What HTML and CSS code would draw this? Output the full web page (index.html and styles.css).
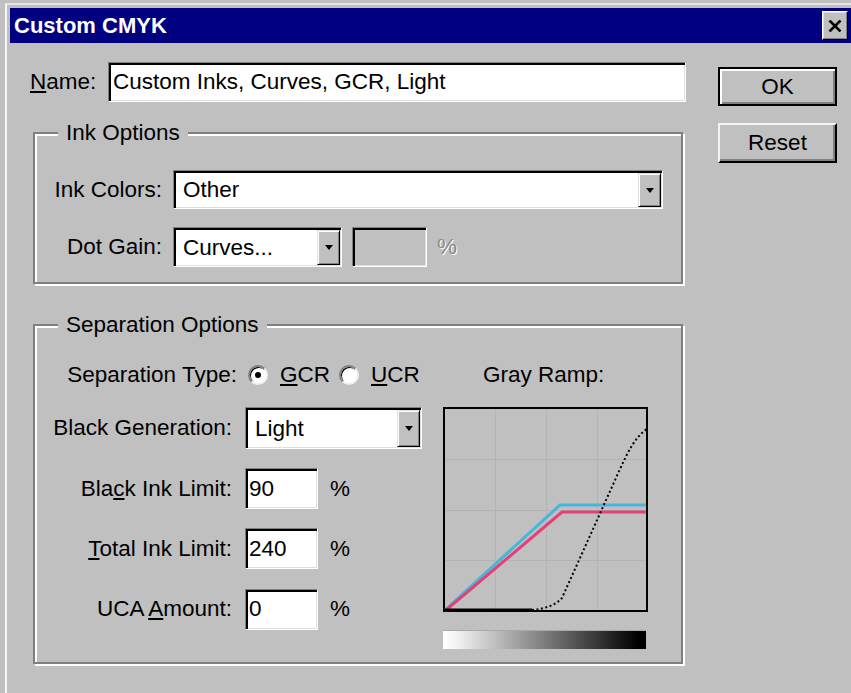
FILE: index.html
```html
<!DOCTYPE html>
<html lang="en">
<head>
<meta charset="utf-8">
<title>Custom CMYK</title>
<link rel="stylesheet" href="styles.css">
</head>
<body>
<div class="window">
  <div class="titlebar">
    <span class="title">Custom CMYK</span>
    <button class="close" aria-label="Close">
      <svg width="14" height="12" viewBox="0 0 14 12"><path d="M1.5 0.5 L12.5 11.5 M12.5 0.5 L1.5 11.5" stroke="#000" stroke-width="2.6" fill="none"/></svg>
    </button>
  </div>

  <div class="content">
    <div class="form">
      <div class="name-row">
        <span class="name-label"><u>N</u>ame:</span>
        <div class="field name-field">Custom Inks, Curves, GCR, Light</div>
      </div>

      <fieldset class="group ink">
        <legend>Ink Options</legend>
        <div class="ink-grid">
          <span class="lbl">Ink Colors:</span>
          <div class="combo wide"><span class="combo-text">Other</span><span class="drop"></span></div>
          <span class="lbl">Dot Gain:</span>
          <div class="dot-row">
            <div class="combo short"><span class="combo-text">Curves...</span><span class="drop"></span></div>
            <div class="field small disabled"></div>
            <span class="pct dim">%</span>
          </div>
        </div>
      </fieldset>

      <fieldset class="group sep">
        <legend>Separation Options</legend>
        <div class="sep-body">
          <div class="sep-grid">
            <span class="lbl lbl-type">Separation Type:</span>
            <div class="radios">
              <span class="radio on"><span class="dot"></span></span>
              <span class="radio-text first"><u>G</u>CR</span>
              <span class="radio"></span>
              <span class="radio-text"><u>U</u>CR</span>
            </div>

            <span class="lbl">Black Generation:</span>
            <div class="combo gen"><span class="combo-text">Light</span><span class="drop"></span></div>

            <span class="lbl">Bla<u>c</u>k Ink Limit:</span>
            <div class="num-row"><div class="field num">90</div><span class="pct">%</span></div>

            <span class="lbl"><u>T</u>otal Ink Limit:</span>
            <div class="num-row"><div class="field num">240</div><span class="pct">%</span></div>

            <span class="lbl">UCA <u>A</u>mount:</span>
            <div class="num-row"><div class="field num">0</div><span class="pct">%</span></div>
          </div>

          <div class="ramp">
            <span class="ramp-title">Gray Ramp:</span>
            <svg class="graph" width="205" height="205" viewBox="0 0 205 205">
              <rect x="1" y="1" width="203" height="203" fill="#c0c0c0" stroke="#000" stroke-width="2"/>
              <g stroke="#b3b3b3" stroke-width="1">
                <path d="M52.5 2 V203 M103.5 2 V203 M154.5 2 V203"/>
                <path d="M2 52.5 H203 M2 103.5 H203 M2 153.5 H203"/>
              </g>
              <polyline points="2,203 117,98 203,98" fill="none" stroke="#46b6da" stroke-width="3"/>
              <polyline points="2,204 119,105 203,105" fill="none" stroke="#e63f78" stroke-width="3"/>
              <path d="M1 203 H89" stroke="#000" stroke-width="3"/>
              <path d="M89 203 C100 202 112 199 119 191 L177 62 C185 45 192 30 204 22" fill="none" stroke="#000" stroke-width="2" stroke-dasharray="2 2.5"/>
            </svg>
            <div class="gradient"></div>
          </div>
        </div>
      </fieldset>
    </div>

    <div class="buttons">
      <button class="btn default">OK</button>
      <button class="btn">Reset</button>
    </div>
  </div>
</div>
</body>
</html>
```

FILE: styles.css
```css
html, body {
  margin: 0;
  background: #c0c0c0;
}

body {
  width: 851px;
  height: 693px;
  overflow: hidden;
  font-family: "Liberation Sans", Arial, sans-serif;
  font-size: 22.5px;
  line-height: 26px;
  color: #000;
}

u {
  text-decoration-thickness: 2px;
  text-underline-offset: 2px;
}

/* dialog frame */
.window {
  box-sizing: border-box;
  width: 849px;
  height: 690px;
  margin: 3px 0 0 5px;
  padding: 3px 3px 0 3px;
  border-top: 2px solid #e6e6e6;
  border-left: 2px solid #f4f4f4;
  background: #c0c0c0;
}

.titlebar {
  height: 35px;
  background: #000080;
  display: flex;
  align-items: center;
  justify-content: space-between;
  padding: 0 3px 0 4px;
}

.title {
  color: #fff;
  font-weight: bold;
  font-size: 22px;
}

.close {
  box-sizing: border-box;
  width: 26px;
  height: 29px;
  padding: 0;
  background: #c0c0c0;
  border: 1px solid;
  border-color: #fff #000 #000 #fff;
  box-shadow: inset -1px -1px 0 #808080, inset 1px 1px 0 #dfdfdf;
  display: flex;
  align-items: center;
  justify-content: center;
}

.content {
  display: flex;
  padding: 19px 0 0 20px;
}

.form {
  width: 656px;
}

/* sunken edit box */
.field {
  box-sizing: border-box;
  height: 40px;
  background: #fff;
  border: 1px solid;
  border-color: #808080 #fff #fff #808080;
  box-shadow: inset 2px 2px 0 #000, inset -1px -1px 0 #dfdfdf;
  display: flex;
  align-items: center;
}

.field.disabled {
  background: #c0c0c0;
}

.name-row {
  display: flex;
  align-items: center;
  height: 40px;
}

.name-label {
  width: 78px;
}

.name-field {
  width: 578px;
  padding-left: 4px;
}

/* etched group boxes */
.group {
  box-sizing: border-box;
  width: 650px;
  margin: 18px 0 0 3px;
  padding: 0;
  min-inline-size: 0;
  border: 2px solid #808080;
  box-shadow: 2px 2px 0 #fff, inset 2px 2px 0 #fff;
}

.group legend {
  margin-left: 23px;
  padding: 0 8px;
  line-height: 26px;
  background: #c0c0c0;
}

.lbl {
  justify-self: end;
  white-space: nowrap;
}

.ink-grid {
  display: grid;
  grid-template-columns: 127px auto;
  column-gap: 11px;
  row-gap: 18px;
  align-items: center;
  padding: 24px 0 15px;
}

/* combo boxes */
.combo {
  box-sizing: border-box;
  height: 40px;
  display: flex;
  padding: 2px 1px 1px 2px;
  background: #fff;
  border: 1px solid;
  border-color: #808080 #fff #fff #808080;
  box-shadow: inset 2px 2px 0 #000, inset -1px -1px 0 #dfdfdf;
}

.combo-text {
  flex: 1;
  display: flex;
  align-items: center;
  padding-left: 7px;
  white-space: nowrap;
}

.drop {
  box-sizing: border-box;
  width: 23px;
  background: #c0c0c0;
  border: 1px solid;
  border-color: #dfdfdf #000 #000 #dfdfdf;
  box-shadow: inset 1px 1px 0 #fff, inset -1px -1px 0 #808080;
  display: flex;
  align-items: center;
  justify-content: center;
}

.drop::after {
  content: "";
  border-left: 4.5px solid transparent;
  border-right: 4.5px solid transparent;
  border-top: 5px solid #000;
}

.wide {
  width: 490px;
  height: 39px;
}

.short {
  width: 169px;
}

.gen {
  width: 177px;
  height: 42px;
}

.dot-row,
.num-row {
  display: flex;
  align-items: center;
}

.small {
  width: 75px;
  margin-left: 10px;
}

.pct {
  margin-left: 12px;
}

.dim {
  margin-left: 10px;
  color: #8a8a8a;
  text-shadow: 1px 1px 0 #fff;
}

/* separation options */
.sep {
  margin-top: 28px;
}

.sep-body {
  display: flex;
  align-items: flex-start;
  padding: 24px 0 13px;
}

.sep-grid {
  display: grid;
  grid-template-columns: 197px auto;
  grid-template-rows: 26px 42px 41px 41px 42px;
  column-gap: 13px;
  row-gap: 19px;
  align-items: center;
}

.lbl-type {
  margin-right: -5px;
}

.radios {
  display: flex;
  align-items: center;
  padding-left: 3px;
}

.radio {
  box-sizing: border-box;
  width: 20px;
  height: 20px;
  border-radius: 50%;
  background: #fff;
  border: 2px solid;
  border-color: #808080 #f0f0f0 #f0f0f0 #808080;
  box-shadow: inset 1px 1px 0 #000;
  display: flex;
  align-items: center;
  justify-content: center;
}

.dot {
  width: 6px;
  height: 6px;
  border-radius: 50%;
  background: #000;
}

.radio-text {
  margin-left: 12px;
}

.radio-text.first {
  margin-right: 9px;
}

.num {
  width: 73px;
  height: 41px;
  padding-left: 3px;
}

.ramp {
  margin-left: 21px;
  display: flex;
  flex-direction: column;
}

.ramp-title {
  height: 26px;
  padding-left: 40px;
}

.graph {
  display: block;
  margin-top: 19px;
}

.gradient {
  width: 203px;
  height: 19px;
  margin-top: 18px;
  background: linear-gradient(to right, #fff 0%, #f4f4f4 6%, #000 96%);
  box-shadow: inset 0 1px 0 #a8a8a8;
}

/* push buttons */
.buttons {
  display: flex;
  flex-direction: column;
  gap: 17px;
  margin-left: 32px;
  padding-top: 5px;
}

.btn {
  box-sizing: border-box;
  width: 119px;
  height: 40px;
  padding: 0;
  font: inherit;
  color: #000;
  background: #c0c0c0;
  border: 2px solid;
  border-color: #f4f4f4 #000 #000 #f4f4f4;
  box-shadow: inset -2px -2px 0 #808080;
}

.btn.default {
  height: 39px;
  border-color: #000;
  box-shadow: inset 2px 2px 0 #fff, inset -2px -2px 0 #808080;
}
```
